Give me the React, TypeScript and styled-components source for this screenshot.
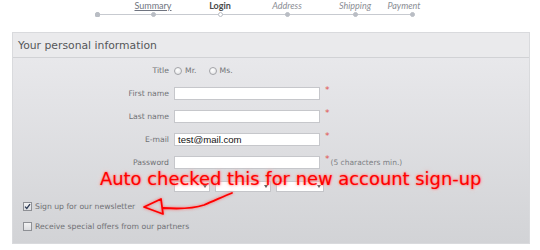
import styled, { createGlobalStyle } from "styled-components";

const GlobalStyle = createGlobalStyle`
  body {
    margin: 0;
    background: #ffffff;
  }
  * {
    box-sizing: border-box;
  }
`;

const Page = styled.div`
  position: relative;
  width: 540px;
  height: 250px;
  overflow: hidden;
  background: #ffffff;
  font-family: "DejaVu Sans", Verdana, sans-serif;
`;

const Steps = styled.div`
  display: grid;
  grid-template-columns: 12px 100px 34px 100px 36px 78px;
  margin-left: 91px;
  width: 360px;
  height: 22px;
  background: linear-gradient(#c7cad0, #c7cad0) 6px 14px / 315px 1px no-repeat;
`;

const Step = styled.div`
  display: flex;
  flex-direction: column;
  align-items: center;
`;

const StepLabel = styled.span<{ $kind: "done" | "current" | "next"; $shift?: number }>`
  height: 11px;
  line-height: 11px;
  margin-right: ${(p) => (p.$shift ? `${p.$shift}px` : "0")};
  font-family: Lato, "Open Sans", sans-serif;
  font-size: 9px;
  white-space: nowrap;
  color: ${(p) => (p.$kind === "current" ? "#4a4a4a" : p.$kind === "done" ? "#6f7480" : "#8a8d94")};
  font-weight: ${(p) => (p.$kind === "current" ? 700 : 400)};
  font-style: ${(p) => (p.$kind === "next" ? "italic" : "normal")};
  text-decoration: ${(p) => (p.$kind === "done" ? "underline" : "none")};
`;

const DotSlot = styled.div`
  display: flex;
  align-items: center;
  justify-content: center;
  height: 7px;
`;

const Dot = styled.span<{ $hollow?: boolean; $start?: boolean }>`
  width: 5px;
  height: 5px;
  border-radius: ${(p) => (p.$start ? "2px 2px 1px 1px" : "50%")};
  background: ${(p) => (p.$hollow ? "#ffffff" : "#b9bdc4")};
  border: 1px solid #b9bdc4;
`;

const Panel = styled.section`
  margin: 10px 0 0 12px;
  width: 518px;
  height: 212px;
  border: 1px solid #d9dadd;
  display: flex;
  flex-direction: column;
`;

const PanelHeader = styled.h2`
  margin: 0;
  height: 25px;
  padding-left: 5px;
  display: flex;
  align-items: center;
  background: #eaeaec;
  border-bottom: 1px solid #d1d2d5;
  font-family: "DejaVu Sans", Verdana, sans-serif;
  font-size: 10.8px;
  font-weight: 400;
  color: #555759;
`;

const PanelBody = styled.div`
  flex: 1;
  padding: 6px 0 0 10px;
  background: linear-gradient(#e8e8eb, #d2d3d6);
`;

const FormGrid = styled.div`
  display: grid;
  grid-template-columns: 146px auto;
  grid-auto-rows: 13px;
  column-gap: 5px;
  row-gap: 10px;
`;

const Label = styled.label`
  justify-self: end;
  align-self: center;
  font-size: 7.7px;
  color: #707175;
  white-space: nowrap;
`;

const Field = styled.div`
  display: flex;
  align-items: center;
  gap: 5px;
`;

const Option = styled.span`
  display: flex;
  align-items: center;
  gap: 3px;
  margin-right: 7px;
  font-size: 7.7px;
  color: #707175;
`;

const Radio = styled.span`
  width: 8px;
  height: 8px;
  border-radius: 50%;
  border: 1px solid #a3a4a8;
  background: radial-gradient(circle at 40% 35%, #ffffff, #dedfe2);
`;

const TextInput = styled.div`
  width: 146px;
  height: 13px;
  border: 1px solid #c6c7cb;
  background: #ffffff;
  padding-left: 3px;
  display: flex;
  align-items: center;
  font-family: "Liberation Sans", Arial, sans-serif;
  font-size: 9.6px;
  color: #111111;
`;

const Required = styled.span`
  align-self: flex-start;
  margin-top: -1px;
  font-size: 9px;
  line-height: 9px;
  color: #e0524f;
`;

const Hint = styled.span`
  margin-left: -4px;
  font-size: 7.5px;
  color: #7d7f84;
  white-space: nowrap;
`;

const Select = styled.div<{ $w: number }>`
  width: ${(p) => p.$w}px;
  height: 11px;
  margin-top: 2px;
  border: 1px solid #c4c5c9;
  background: #ffffff;
  display: flex;
  align-items: center;
  justify-content: flex-end;
  padding-right: 2px;
  &::after {
    content: "";
    border-left: 2px solid transparent;
    border-right: 2px solid transparent;
    border-top: 3px solid #555555;
  }
`;

const Checks = styled.div`
  display: flex;
  flex-direction: column;
  gap: 10px;
  margin-top: 9px;
`;

const CheckRow = styled.label`
  display: flex;
  align-items: center;
  gap: 3px;
  height: 10px;
  font-size: 7.7px;
  color: #707175;
`;

const Box = styled.span`
  width: 9px;
  height: 9px;
  border: 1px solid #8e9095;
  background: linear-gradient(#f2f2f3, #dcdde0);
  display: flex;
  align-items: center;
  justify-content: center;
`;

const Note = styled.div`
  position: absolute;
  left: 100px;
  top: 170px;
  font-family: "DejaVu Sans", sans-serif;
  font-size: 17.9px;
  line-height: 18px;
  color: #ff0000;
  white-space: nowrap;
  text-shadow: 0 0 2px rgba(255, 70, 70, 0.9), 0 0 4px rgba(255, 130, 130, 0.8),
    0 0 6px rgba(255, 255, 255, 0.9);
`;

const Arrow = styled.svg`
  position: absolute;
  left: 0;
  top: 0;
  overflow: visible;
  filter: drop-shadow(0 0 1.5px rgba(255, 90, 90, 0.9));
`;

function Checkbox({ checked }: { checked?: boolean }) {
  return (
    <Box>
      {checked && (
        <svg width="7" height="7" viewBox="0 0 7 7">
          <path d="M1 3.6 L2.8 5.4 L6 1.2" fill="none" stroke="#2b3a55" strokeWidth="1.3" />
        </svg>
      )}
    </Box>
  );
}

export default function App() {
  return (
    <Page>
      <GlobalStyle />
      <Steps>
        <Step>
          <StepLabel $kind="done" />
          <DotSlot>
            <Dot $start />
          </DotSlot>
        </Step>
        <Step>
          <StepLabel $kind="done">Summary</StepLabel>
          <DotSlot>
            <Dot />
          </DotSlot>
        </Step>
        <Step>
          <StepLabel $kind="current">Login</StepLabel>
          <DotSlot>
            <Dot $hollow />
          </DotSlot>
        </Step>
        <Step>
          <StepLabel $kind="next">Address</StepLabel>
          <DotSlot>
            <Dot />
          </DotSlot>
        </Step>
        <Step>
          <StepLabel $kind="next">Shipping</StepLabel>
          <DotSlot>
            <Dot />
          </DotSlot>
        </Step>
        <Step>
          <StepLabel $kind="next" $shift={16}>Payment</StepLabel>
          <DotSlot>
            <Dot />
          </DotSlot>
        </Step>
      </Steps>

      <Panel>
        <PanelHeader>Your personal information</PanelHeader>
        <PanelBody>
          <FormGrid>
            <Label>Title</Label>
            <Field>
              <Option>
                <Radio /> Mr.
              </Option>
              <Option>
                <Radio /> Ms.
              </Option>
            </Field>

            <Label>First name</Label>
            <Field>
              <TextInput />
              <Required>*</Required>
            </Field>

            <Label>Last name</Label>
            <Field>
              <TextInput />
              <Required>*</Required>
            </Field>

            <Label>E-mail</Label>
            <Field>
              <TextInput>test@mail.com</TextInput>
              <Required>*</Required>
            </Field>

            <Label>Password</Label>
            <Field>
              <TextInput />
              <Required>*</Required>
              <Hint>(5 characters min.)</Hint>
            </Field>

            <Label />
            <Field>
              <Select $w={36} />
              <Select $w={56} />
              <Select $w={48} />
            </Field>
          </FormGrid>

          <Checks>
            <CheckRow>
              <Checkbox checked />
              Sign up for our newsletter
            </CheckRow>
            <CheckRow>
              <Checkbox />
              Receive special offers from our partners
            </CheckRow>
          </Checks>
        </PanelBody>
      </Panel>

      <Note>Auto checked this for new account sign-up</Note>
      <Arrow width="540" height="250" viewBox="0 0 540 250">
        <path
          d="M144 207 L161 199 L163 214 Z M163 208 C178 209 192 209 204 205 C214 201 224 196 232 193"
          fill="none"
          stroke="#ff0000"
          strokeWidth="1.8"
          strokeLinejoin="round"
          strokeLinecap="round"
        />
      </Arrow>
    </Page>
  );
}
